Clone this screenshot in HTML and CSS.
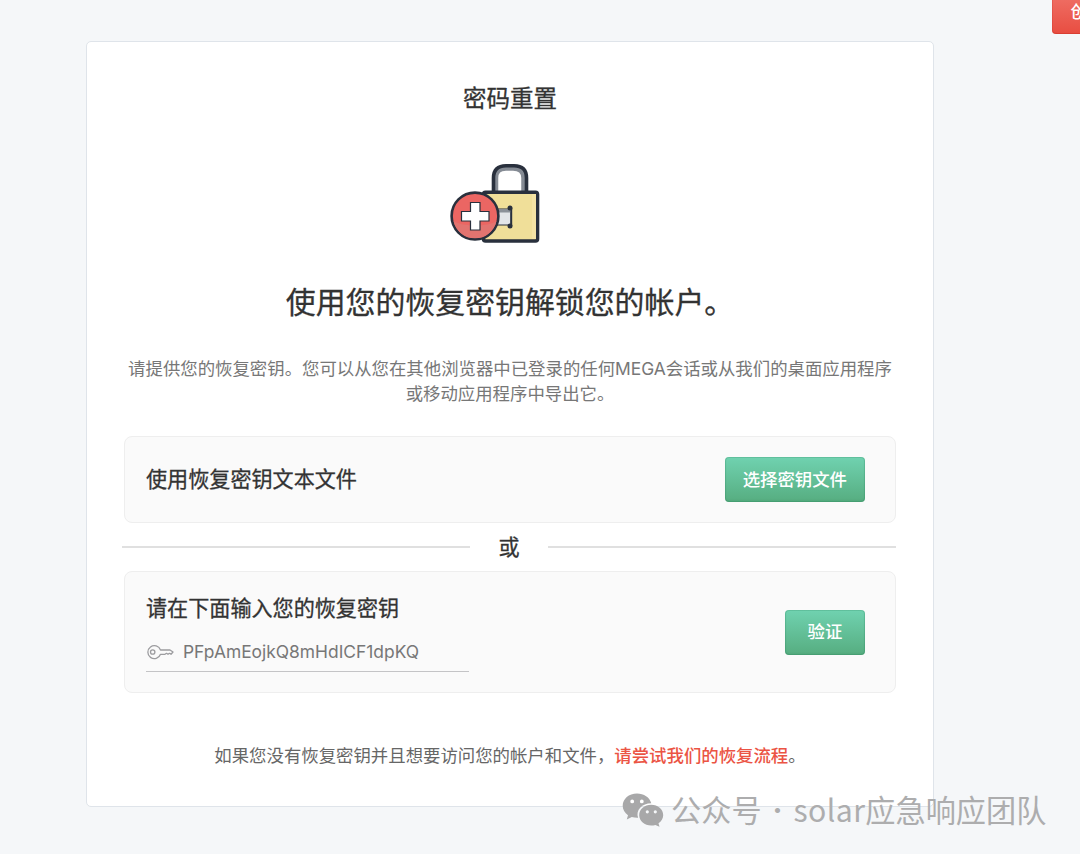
FILE: index.html
```html
<!DOCTYPE html>
<html lang="zh-CN">
<head>
    <meta charset="UTF-8">
    <meta name="viewport" content="width=device-width, initial-scale=1.0">
    <title>密码重置</title>
    <link rel="stylesheet" href="styles.css">
</head>
<body>
    <header class="top-bar">
        <a href="#" class="btn btn-red">创建帐户</a>
    </header>

    <main class="card">
        <h1 class="card-title">密码重置</h1>
        <svg class="lock-icon" width="92" height="82" viewBox="0 0 92 82">
            <path d="M45.500 29V15Q45.500 5 56 5H63Q74 5 74 15V29" fill="none" stroke="#858b94" stroke-width="5.500"/>
            <path d="M43.500 29V15Q43.500 2.800 56 2.800H64Q76.500 2.800 76.500 15V29" fill="none" stroke="#29303d" stroke-width="3.600"/>
            <rect x="33.500" y="29.200" width="54" height="48.800" rx="2" fill="#f0df99" stroke="#29303d" stroke-width="3.600"/>
            <path d="M82 31h4v45h-4z" fill="#f4e3a5"/>
            <path d="M45 46h16v16H45z" fill="#e2e5e8" stroke="#29303d" stroke-width="1.200"/>
            <path d="M45 46.500h16v3H45z" fill="#8b9198"/>
            <path d="M61.300 45v18" stroke="#29303d" stroke-width="1.800"/>
            <circle cx="60" cy="45" r="2.500" fill="#29303d"/>
            <circle cx="60" cy="63" r="2.500" fill="#29303d"/>
            <circle cx="25" cy="53" r="23.400" fill="#eb6663" stroke="#29303d" stroke-width="2.600"/>
            <path d="M3.500 58a22 22 0 0 0 43 0c-8 6-34 6-43 0z" fill="#e27470"/>
            <path d="M20.500 39.500h9.500v9h9v9.500h-9v9h-9.500v-9h-9v-9.500h9z" fill="#fff" stroke="#29303d" stroke-width="1.200"/>
        </svg>
        <h2 class="heading">使用您的恢复密钥解锁您的帐户。</h2>
        <p class="description">请提供您的恢复密钥。您可以从您在其他浏览器中已登录的任何MEGA会话或从我们的桌面应用程序<br>或移动应用程序中导出它。</p>

        <section class="option option-file">
            <h3 class="option-title">使用恢复密钥文本文件</h3>
            <button class="btn btn-green">选择密钥文件</button>
        </section>

        <div class="divider"><span>或</span></div>

        <section class="option option-key">
            <div class="key-form">
                <h3 class="option-title">请在下面输入您的恢复密钥</h3>
                <div class="key-field">
                    <svg class="key-icon" width="28" height="16" viewBox="0 0 28 16">
                        <path d="M13.500 6H23L26 8L24 10.300L22.500 9.300L21 10.300L19.500 9.300L18 10.300H13.500A6.500 6.500 0 1 1 13.500 6Z" fill="none" stroke="#9c9c9f" stroke-width="1.300" stroke-linejoin="round"/>
                        <circle cx="5.700" cy="8" r="2.200" fill="none" stroke="#9c9c9f" stroke-width="1.300"/>
                    </svg>
                    <span>PFpAmEojkQ8mHdICF1dpKQ</span>
                </div>
            </div>
            <button class="btn btn-green">验证</button>
        </section>

        <p class="footnote">如果您没有恢复密钥并且想要访问您的帐户和文件，<a href="#">请尝试我们的恢复流程</a>。</p>
    </main>

    <div class="watermark">
        <svg width="42" height="34" viewBox="0 0 42 34">
            <path fill="#a8a8a9" fill-rule="evenodd" d="M15 0.500C6.800 0.500 0.700 6 0.700 12.800c0 3.900 2 7.200 5.300 9.500L4.800 26.500l5-2.500c2 .600 4 .900 6.300.800C13.500 17 20 10.500 29.300 10.300 27.800 4.400 21.800.500 15 .500zM10.200 6.500a1.900 1.900 0 1 1 0 3.800 1.900 1.900 0 0 1 0-3.800zm9.600 0a1.900 1.900 0 1 1 0 3.800 1.900 1.900 0 0 1 0-3.800z"/>
            <path fill="#a8a8a9" fill-rule="evenodd" d="M29.200 11.800c-6.700 0-12 4.700-12 10.400s5.300 10.300 12 10.300c1.500 0 2.900-.200 4.200-.600l4.100 1.800-1-3.500c2.800-1.900 4.700-4.800 4.700-8 0-5.700-5.300-10.400-12-10.400zM25.300 17.200a1.600 1.600 0 1 1 0 3.200 1.600 1.600 0 0 1 0-3.200zm8 0a1.600 1.600 0 1 1 0 3.200 1.600 1.600 0 0 1 0-3.200z"/>
        </svg>
        <span class="wm-label">公众号</span>
        <span class="wm-dot">·</span>
        <span class="wm-name">solar</span><span class="wm-team">应急响应团队</span>
    </div>
</body>
</html>
```
FILE: styles.css
```css
* {
    box-sizing: border-box;
}

body {
    margin: 0;
    position: relative;
    height: 854px;
    overflow: hidden;
    background: #f5f7f9;
    color: #333;
    font-family: Inter, "Noto Sans CJK SC", sans-serif;
}

h1, h2, h3, p {
    margin: 0;
    font-weight: 400;
}

.top-bar {
    display: flex;
    justify-content: flex-end;
    align-items: flex-end;
    width: 1158px;
    height: 34px;
}

.btn {
    display: flex;
    align-items: center;
    justify-content: center;
    flex-shrink: 0;
    height: 45px;
    padding: 0 18px;
    border: 0;
    border-radius: 4px;
    color: #fff;
    font-family: inherit;
    font-size: 17.4px;
    font-weight: 500;
    line-height: 26px;
    text-decoration: none;
    white-space: nowrap;
}

.btn-red {
    background: linear-gradient(#f0756b, #e84d41);
    box-shadow: inset 0 0 0 1px rgba(200, 40, 30, 0.2), inset 0 -1px 1px rgba(160, 20, 10, 0.15);
}

.btn-green {
    background: linear-gradient(#70d2b0, #56ad80);
    box-shadow: inset 0 0 0 1px rgba(40, 130, 90, 0.2), inset 0 -1px 2px rgba(20, 100, 60, 0.15);
}

.card {
    display: flex;
    flex-direction: column;
    align-items: center;
    width: 848px;
    height: 766px;
    margin: 7px 0 0 86px;
    padding-top: 40px;
    background: #fff;
    border: 1px solid #dfe4ea;
    border-radius: 5px;
}

.card-title,
.heading,
.option-title,
.divider {
    -webkit-text-stroke: 0.3px #333;
}

.card-title {
    font-size: 23.5px;
    line-height: 34px;
}

.lock-icon {
    margin: 47px 28px 0 0;
}

.heading {
    margin-top: 36px;
    font-size: 29.9px;
    line-height: 42px;
}

.description {
    margin-top: 33px;
    color: #777;
    font-size: 17.4px;
    line-height: 25px;
    text-align: center;
    white-space: nowrap;
}

.option {
    display: flex;
    align-items: center;
    justify-content: space-between;
    width: 772px;
    padding: 0 30px 0 21px;
    background: #fafafa;
    border: 1px solid #eee;
    border-radius: 8px;
}

.option-file {
    height: 87px;
    margin-top: 30px;
}

.option-key {
    height: 122px;
}

.option-title {
    font-size: 21.1px;
    line-height: 30px;
}

.option .btn {
    min-width: 80px;
}

.divider {
    display: flex;
    align-items: center;
    width: 774px;
    height: 48px;
    margin-right: 2px;
    gap: 28px;
    font-size: 21.1px;
}

.divider span {
    padding-bottom: 3px;
}

.divider::before,
.divider::after {
    content: "";
    flex: 1;
    height: 2px;
    background: #e0e0e0;
}

.key-form {
    padding-top: 2px;
}

.key-field {
    display: flex;
    align-items: center;
    width: 323px;
    height: 40px;
    margin-top: 8px;
    border-bottom: 1px solid #c4c4c6;
    color: #777;
    font-size: 17.4px;
}

.key-icon {
    margin: 0 8px 0 1px;
}

.footnote {
    margin-top: 50px;
    color: #666;
    font-size: 17.4px;
    line-height: 26px;
    white-space: nowrap;
}

.footnote a {
    color: #eb5444;
    font-weight: 500;
    text-decoration: none;
}

.watermark {
    position: absolute;
    left: 622px;
    top: 788px;
    display: flex;
    align-items: center;
    height: 44px;
    color: #adadae;
    font-family: "Noto Sans CJK SC", sans-serif;
    font-size: 30.2px;
    line-height: 42px;
    white-space: nowrap;
}

.watermark span {
    padding-bottom: 2px;
}

.wm-label {
    margin-left: 7px;
}

.wm-dot {
    width: 32px;
    font-size: 24px;
    text-align: center;
}

.wm-name {
    letter-spacing: 0.4px;
}
```
